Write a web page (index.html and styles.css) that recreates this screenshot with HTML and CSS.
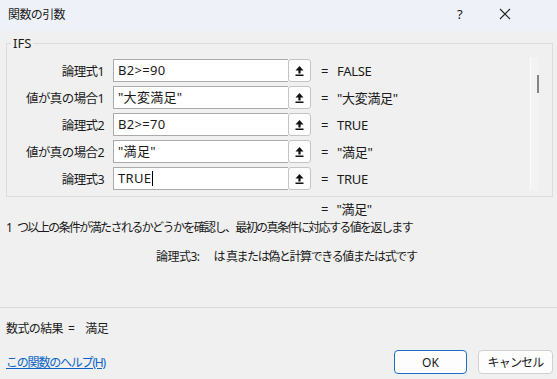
FILE: index.html
```html
<!DOCTYPE html>
<html lang="ja">
<head>
  <meta charset="UTF-8">
  <title>関数の引数</title>
  <link rel="stylesheet" href="styles.css">
</head>
<body>
  <div class="titlebar">
    <span class="title">関数の引数</span>
    <span class="help-btn">?</span>
    <svg class="close" width="12" height="12" viewBox="0 0 12 12"><path d="M1 1 L11 11 M11 1 L1 11" stroke="#222" stroke-width="1.1" fill="none"/></svg>
  </div>

  <div class="content">
    <fieldset class="group">
      <legend>IFS</legend>
      <div class="group-inner">
        <div class="args">
          <span class="arg-label">論理式1</span>
          <div class="field"><span class="field-input">B2&gt;=90</span><span class="ref-btn"><svg width="9" height="10" viewBox="0 0 9 10"><path d="M4.5 0 L8.5 4.5 H5.6 V7.5 H3.4 V4.5 H0.5 Z M0.5 8.5 H8.5 V10 H0.5 Z" fill="#111"/></svg></span></div>
          <span class="eq">=</span><span class="val">FALSE</span>

          <span class="arg-label">値が真の場合1</span>
          <div class="field"><span class="field-input">"大変満足"</span><span class="ref-btn"><svg width="9" height="10" viewBox="0 0 9 10"><path d="M4.5 0 L8.5 4.5 H5.6 V7.5 H3.4 V4.5 H0.5 Z M0.5 8.5 H8.5 V10 H0.5 Z" fill="#111"/></svg></span></div>
          <span class="eq">=</span><span class="val">"大変満足"</span>

          <span class="arg-label">論理式2</span>
          <div class="field"><span class="field-input">B2&gt;=70</span><span class="ref-btn"><svg width="9" height="10" viewBox="0 0 9 10"><path d="M4.5 0 L8.5 4.5 H5.6 V7.5 H3.4 V4.5 H0.5 Z M0.5 8.5 H8.5 V10 H0.5 Z" fill="#111"/></svg></span></div>
          <span class="eq">=</span><span class="val">TRUE</span>

          <span class="arg-label">値が真の場合2</span>
          <div class="field"><span class="field-input">"満足"</span><span class="ref-btn"><svg width="9" height="10" viewBox="0 0 9 10"><path d="M4.5 0 L8.5 4.5 H5.6 V7.5 H3.4 V4.5 H0.5 Z M0.5 8.5 H8.5 V10 H0.5 Z" fill="#111"/></svg></span></div>
          <span class="eq">=</span><span class="val">"満足"</span>

          <span class="arg-label">論理式3</span>
          <div class="field"><span class="field-input">TRUE<span class="caret"></span></span><span class="ref-btn"><svg width="9" height="10" viewBox="0 0 9 10"><path d="M4.5 0 L8.5 4.5 H5.6 V7.5 H3.4 V4.5 H0.5 Z M0.5 8.5 H8.5 V10 H0.5 Z" fill="#111"/></svg></span></div>
          <span class="eq">=</span><span class="val">TRUE</span>
        </div>
        <div class="scroll"><div class="thumb"></div></div>
      </div>
    </fieldset>

    <div class="result-line"><span class="eq">=</span><span class="val">"満足"</span></div>
    <p class="desc"><span class="num">1</span>つ以上の条件が満たされるかどうかを確認し、最初の真条件に対応する値を返します</p>
    <p class="arg-desc"><span class="arg-name">論理式3:</span>は 真または偽と計算できる値または式です</p>

    <hr class="sep">

    <p class="formula-result">数式の結果<span class="res-eq">=</span><span class="res-val">満足</span></p>

    <div class="footer">
      <a class="help-link" href="#">この関数のヘルプ(H)</a>
      <button class="btn btn-ok">OK</button>
      <button class="btn">キャンセル</button>
    </div>
  </div>
</body>
</html>
```

FILE: styles.css
```css
body { margin: 0; background: #f0f0f0; font-family: "Noto Sans", "Noto Sans CJK JP", sans-serif; font-size: 12px; color: #1a1a1a; }

.titlebar { height: 31px; background: #eef1f8; display: flex; align-items: center; padding: 0 0 3px 8px; box-sizing: border-box; }
.title { flex: 1; letter-spacing: -0.6px; }
.help-btn { width: 12px; font-size: 13px; margin-right: 30px; }
.close { margin-right: 46px; }

.content { padding: 0 4px 0 6px; }

.group { margin: 4px 0 0; padding: 8px 0 6px; border: 1px solid #dcdcdc; min-width: 0; }
.group legend { margin-left: 4px; padding: 0 2px; line-height: 16px; font-size: 13px; }
.group-inner { display: flex; }

.args { display: grid; grid-template-columns: 97px 207px 18px auto; row-gap: 4px; align-items: center; }
.arg-label { text-align: right; letter-spacing: -0.6px; font-size: 12.5px; }
.field { display: flex; height: 23px; margin-left: 9px; }
.field-input { flex: 1; background: #fff; border: 1px solid #ababab; border-right: none; padding: 0 4px; line-height: 21px; font-size: 13px; letter-spacing: 0.3px; }
.caret { display: inline-block; width: 1px; height: 15px; background: #000; vertical-align: -3px; margin-left: 1px; }
.ref-btn { width: 21px; background: #fdfdfd; border: 1px solid #c4c4c4; border-radius: 3px; display: flex; align-items: center; justify-content: center; }

.eq { padding-left: 10px; font-size: 13px; }
.val { padding-left: 8px; font-size: 13px; letter-spacing: -0.3px; white-space: nowrap; }

.scroll { width: 7px; margin: -2px 14px 0 auto; height: 133px; border-left: 1px solid #fbfbfb; background: #f3f3f3; }
.thumb { width: 2px; height: 18px; margin: 18px 0 0 6px; background: #858585; }

.result-line { margin-top: 4px; line-height: 16px; padding-left: 305px; }

.desc { margin: 2px 0 0; line-height: 16px; letter-spacing: -1.6px; }
.desc .num { letter-spacing: 0; margin-right: 4px; }
.arg-desc { margin: 13px 0 0; line-height: 16px; padding-left: 150px; letter-spacing: -1.4px; }
.arg-name { margin-right: 14px; letter-spacing: -0.5px; }

.sep { margin: 42px -4px 0 -6px; border: none; border-top: 1px solid #dadada; }

.formula-result { margin: 13px 0 0; line-height: 16px; letter-spacing: -0.6px; }
.res-eq { margin-left: 5px; }
.res-val { margin-left: 11px; }

.footer { display: flex; align-items: center; margin-top: 13px; }
.help-link { flex: 1; color: #0a64c8; letter-spacing: -1.2px; }
.btn { width: 73px; height: 24px; font: inherit; font-size: 12px; color: #1a1a1a; background: #fdfdfd; border: 1px solid #d0d0d0; border-radius: 4px; margin-left: 11px; }
.btn-ok { border-color: #1a6fc4; margin-left: 0; }
.btn:last-child { width: 75px; letter-spacing: -0.8px; }
```
